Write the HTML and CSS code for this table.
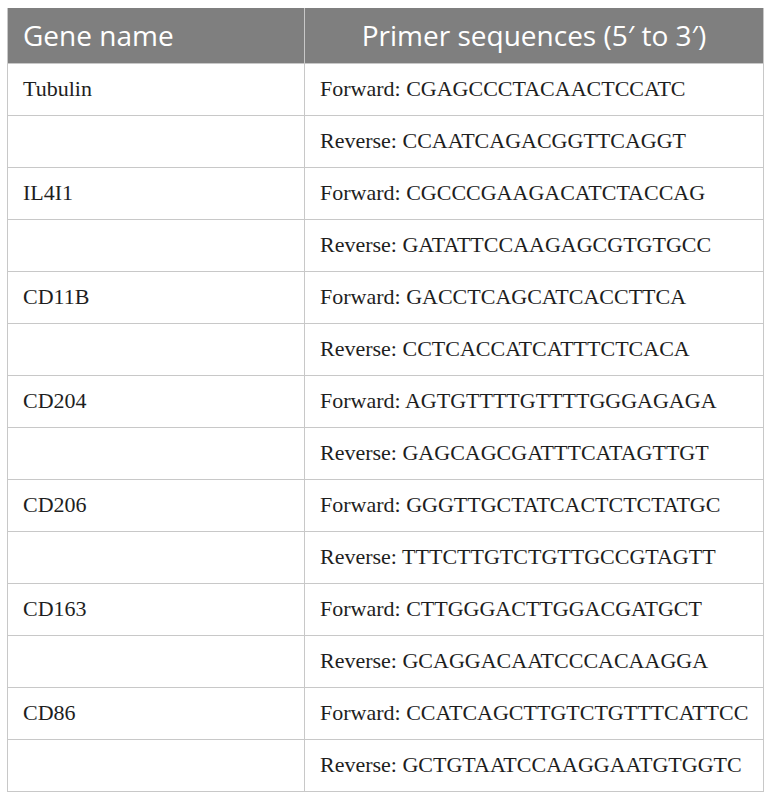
FILE: index.html
```html
<!DOCTYPE html>
<html>
<head>
<meta charset="utf-8">
<link rel="stylesheet" href="styles.css">
</head>
<body>
<table class="primers">
  <thead>
    <tr><th class="c-gene">Gene name</th><th class="c-seq">Primer sequences (5′ to 3′)</th></tr>
  </thead>
  <tbody>
    <tr><td>Tubulin</td><td>Forward: CGAGCCCTACAACTCCATC</td></tr>
    <tr><td></td><td>Reverse: CCAATCAGACGGTTCAGGT</td></tr>
    <tr><td>IL4I1</td><td>Forward: CGCCCGAAGACATCTACCAG</td></tr>
    <tr><td></td><td>Reverse: GATATTCCAAGAGCGTGTGCC</td></tr>
    <tr><td>CD11B</td><td>Forward: GACCTCAGCATCACCTTCA</td></tr>
    <tr><td></td><td>Reverse: CCTCACCATCATTTCTCACA</td></tr>
    <tr><td>CD204</td><td>Forward: AGTGTTTTGTTTTGGGAGAGA</td></tr>
    <tr><td></td><td>Reverse: GAGCAGCGATTTCATAGTTGT</td></tr>
    <tr><td>CD206</td><td>Forward: GGGTTGCTATCACTCTCTATGC</td></tr>
    <tr><td></td><td>Reverse: TTTCTTGTCTGTTGCCGTAGTT</td></tr>
    <tr><td>CD163</td><td>Forward: CTTGGGACTTGGACGATGCT</td></tr>
    <tr><td></td><td>Reverse: GCAGGACAATCCCACAAGGA</td></tr>
    <tr><td>CD86</td><td>Forward: CCATCAGCTTGTCTGTTTCATTCC</td></tr>
    <tr><td></td><td>Reverse: GCTGTAATCCAAGGAATGTGGTC</td></tr>
  </tbody>
</table>
</body>
</html>
```
FILE: styles.css
```css
html, body {
  margin: 0;
  padding: 0;
  background: #ffffff;
}
body {
  padding: 8px 8px 0 7px;
}
.primers {
  width: 757px;
  border-collapse: collapse;
  table-layout: fixed;
}
.primers th {
  background: #7f7f7f;
  color: #ffffff;
  font-family: "Open Sans", "Noto Sans", sans-serif;
  font-weight: 400;
  font-size: 28px;
  height: 55px;
  padding: 0 15px;
  border: 1px solid #c8c8c8;
  border-top: none;
  vertical-align: middle;
  box-sizing: border-box;
}
.primers .c-gene {
  width: 297px;
  text-align: left;
}
.primers .c-seq {
  text-align: center;
}
.primers td {
  font-family: "Liberation Serif", "Times New Roman", serif;
  font-size: 22px;
  color: #1e1e1e;
  height: 52px;
  padding: 0 15px;
  border: 1px solid #c8c8c8;
  vertical-align: middle;
  white-space: nowrap;
  box-sizing: border-box;
}
```
